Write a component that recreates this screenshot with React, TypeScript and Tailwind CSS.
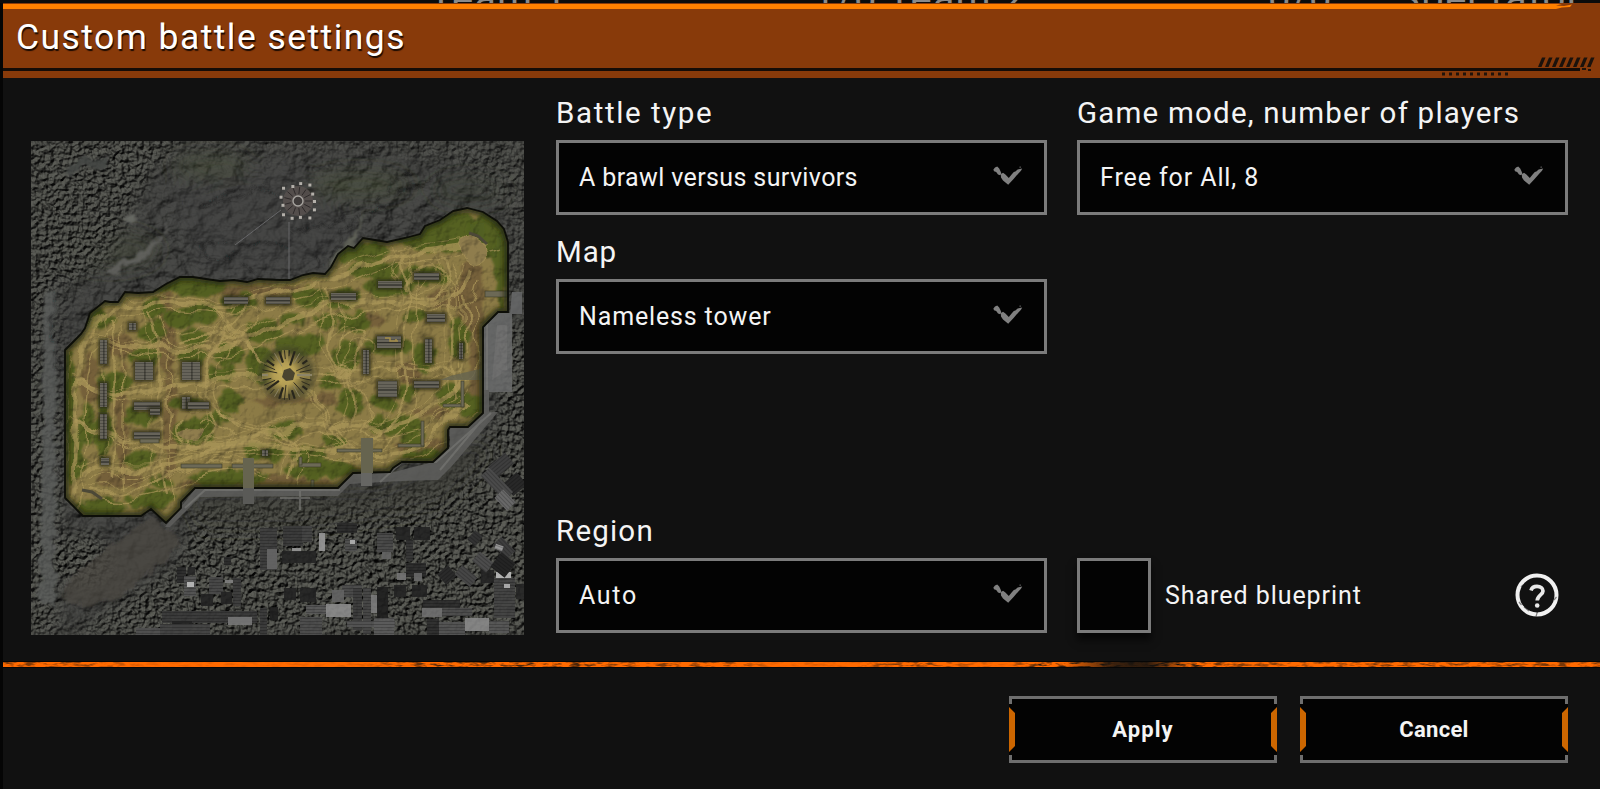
import React from "react";

const AREA =
  "65,350 75,340 81,334 85,328 90,313 105,301 110,302 118,302 125,292 138,293 153,292 166,284 180,277 193,277 206,279 220,281 234,280 247,282 258,279 280,280 290,280 303,275 313,273 325,274 331,267 338,254 348,246 354,248 363,238 375,240 387,242 405,238 420,234 425,226 440,220 453,211 467,208 483,212 497,221 504,229 508,242 508,312 498,312 483,327 483,413 468,427 450,427 448,430 448,448 433,462 402,462 393,468 390,472 353,473 338,488 195,488 181,502 181,508 166,523 151,509 141,516 83,516 65,498";

// cx, cy, rx, ry
const grass: number[][] = [
  [190, 286, 36, 8], [98, 320, 13, 7], [155, 308, 11, 8], [153, 331, 11, 9], [183, 318, 17, 8], [204, 314, 12, 8],
  [193, 338, 14, 6], [237, 303, 18, 7], [228, 355, 13, 9], [144, 356, 14, 6], [191, 356, 13, 6], [264, 332, 16, 9],
  [222, 374, 12, 6], [69, 400, 4, 45], [262, 366, 14, 15], [440, 232, 44, 20], [490, 232, 18, 24], [360, 252, 26, 8],
  [390, 287, 22, 7], [373, 271, 24, 7], [426, 275, 22, 8], [310, 298, 14, 7], [345, 297, 18, 7], [345, 322, 7, 8],
  [324, 322, 9, 7], [360, 323, 7, 10], [293, 320, 11, 5], [347, 355, 14, 13], [300, 345, 24, 8], [390, 347, 22, 7],
  [415, 317, 8, 5], [459, 340, 7, 20], [501, 270, 5, 38], [230, 401, 12, 9], [193, 431, 19, 12], [140, 459, 14, 7],
  [214, 418, 12, 4], [257, 452, 13, 7], [74, 455, 8, 30], [100, 508, 26, 7], [150, 500, 22, 6], [162, 482, 10, 5],
  [121, 381, 9, 8], [350, 402, 11, 12], [285, 430, 15, 7], [310, 454, 15, 8], [395, 425, 25, 8], [412, 438, 10, 6],
  [335, 441, 10, 6], [272, 453, 8, 8], [382, 404, 12, 6], [450, 396, 12, 9], [472, 405, 9, 10], [424, 358, 9, 12],
  [140, 418, 14, 6], [104, 436, 7, 22], [88, 425, 5, 20], [105, 396, 6, 18], [187, 404, 17, 4], [320, 470, 36, 6],
  [230, 478, 38, 6], [425, 455, 20, 5], [330, 383, 9, 7], [406, 392, 9, 5],
];

const brown: number[][] = [
  [166, 330, 8, 40], [170, 420, 7, 60], [122, 420, 6, 60], [118, 480, 24, 7], [260, 485, 80, 8], [430, 448, 40, 8],
  [470, 300, 14, 40], [478, 370, 9, 44], [250, 290, 60, 5], [120, 345, 14, 12], [90, 380, 8, 26], [370, 320, 16, 6],
  [430, 412, 18, 5], [340, 470, 30, 6], [445, 300, 18, 7], [320, 400, 14, 5], [280, 400, 30, 4], [408, 372, 12, 12],
];

const roads = [
  "M70 500 C78 420 70 360 95 320 C120 300 180 300 210 305 S330 280 380 262 S470 250 490 240",
  "M90 340 C140 350 220 355 245 340 S330 300 400 300 S460 310 470 270",
  "M80 380 C110 400 140 395 170 385 S240 380 262 376",
  "M85 470 C130 460 160 475 190 460 S240 440 330 450 S420 450 470 400",
  "M75 420 C120 450 160 445 210 445 S300 415 340 425 S440 420 460 380",
  "M210 305 C230 330 245 345 262 360 M300 385 C330 410 330 430 350 455",
  "M250 300 C240 330 210 340 205 370 S215 420 260 430 S300 440 290 480",
  "M310 375 C350 370 400 365 440 372 S470 350 465 300",
  "M400 250 C420 300 400 320 405 370 S390 420 370 440",
  "M330 290 C340 320 320 340 335 360 S370 390 350 430",
  "M110 320 C120 370 110 430 115 480 M150 310 C170 350 150 420 165 495",
  "M440 255 C460 290 445 340 455 400 M90 490 C130 500 160 480 190 470 S240 460 260 470",
  "M180 340 C200 330 230 330 250 350 M180 420 C170 440 190 450 210 440 S220 410 190 415",
  "M405 290 C412 262 440 262 446 280 S430 300 410 292 M340 340 C355 325 370 330 362 350 S350 380 338 372",
];

const houses: number[][] = [
  [224, 297, 24, 7], [266, 297, 24, 7], [129, 323, 7, 7], [100, 340, 7, 24], [135, 362, 18, 18], [182, 362, 18, 18],
  [100, 383, 7, 24], [331, 293, 25, 7], [378, 281, 24, 7], [414, 273, 25, 7], [427, 314, 18, 8], [377, 336, 24, 12],
  [363, 350, 6, 24], [425, 339, 7, 24], [459, 343, 4, 16], [378, 381, 19, 16], [414, 381, 25, 7], [100, 414, 7, 25],
  [134, 402, 26, 8], [150, 409, 10, 6], [182, 397, 8, 12], [188, 402, 21, 7], [134, 432, 26, 7], [101, 458, 8, 7],
  [262, 450, 6, 6],
];

const walls: number[][] = [
  [181, 464, 41, 4], [232, 464, 41, 4], [337, 449, 45, 3], [398, 444, 26, 3], [421, 421, 3, 25], [299, 463, 22, 4],
  [299, 457, 3, 8], [443, 404, 21, 3], [461, 381, 3, 26], [485, 291, 24, 6], [311, 480, 3, 14], [140, 439, 19, 4],
];

// x, y, w, h, grey level
const city: number[][] = [
  [260, 528, 17, 42, 62], [267, 549, 10, 20, 102], [177, 567, 9, 16, 43], [188, 567, 7, 8, 38], [184, 576, 12, 20, 84],
  [187, 582, 7, 5, 190], [162, 611, 95, 12, 58], [172, 621, 20, 8, 34], [228, 617, 24, 8, 120], [209, 577, 14, 17, 72],
  [201, 594, 12, 12, 34], [221, 592, 11, 12, 34], [233, 578, 8, 28, 60], [225, 580, 8, 3, 130], [136, 628, 24, 7, 80],
  [160, 624, 50, 11, 68], [260, 608, 7, 27, 58], [224, 557, 7, 8, 44], [283, 526, 20, 20, 58], [302, 526, 10, 16, 68],
  [319, 533, 6, 18, 152], [292, 548, 9, 4, 150], [282, 551, 34, 12, 36], [337, 523, 20, 10, 42], [345, 539, 12, 12, 80],
  [350, 540, 5, 4, 180], [377, 533, 16, 19, 74], [382, 552, 9, 7, 100], [396, 527, 14, 13, 34], [414, 527, 16, 13, 34],
  [406, 540, 7, 21, 52], [406, 563, 20, 14, 42], [397, 573, 9, 7, 116], [414, 573, 8, 8, 104], [394, 585, 12, 12, 34],
  [412, 585, 15, 12, 34], [342, 585, 20, 12, 76], [284, 588, 12, 12, 34], [300, 588, 16, 14, 34], [306, 605, 20, 9, 90],
  [326, 604, 25, 13, 140], [353, 588, 9, 42, 60], [363, 588, 8, 46, 70], [377, 587, 11, 31, 30], [371, 595, 6, 18, 124],
  [300, 617, 22, 18, 78], [347, 621, 48, 6, 84], [374, 618, 20, 17, 92], [423, 600, 37, 8, 46], [422, 608, 20, 9, 112],
  [442, 608, 30, 8, 78], [427, 619, 12, 16, 46], [439, 622, 26, 13, 84], [465, 618, 24, 13, 136], [489, 621, 20, 12, 88],
  [496, 572, 15, 6, 188], [494, 578, 21, 40, 68], [504, 584, 6, 4, 180], [516, 584, 8, 15, 38], [270, 607, 8, 13, 30],
  [332, 590, 12, 12, 100], [481, 570, 13, 13, 34],
];

// x, y, w, h, angle, grey level
const turned: number[][] = [
  [490, 458, 22, 14, -40, 62], [506, 476, 18, 16, -40, 40], [480, 478, 34, 12, 46, 74], [496, 494, 18, 12, 46, 104],
  [474, 556, 18, 12, 40, 76], [494, 542, 20, 12, 46, 62], [494, 556, 18, 18, 38, 36], [440, 568, 14, 14, -40, 42],
  [456, 570, 20, 12, 40, 70], [495, 545, 8, 5, 20, 150], [470, 532, 10, 12, 40, 50],
];

const rays = Array.from({ length: 30 }, (_, i) => (i * 12 * Math.PI) / 180);
const posts = Array.from({ length: 13 }, (_, i) => (i * 27.7 * Math.PI) / 180);

const MapPreview: React.FC = () => (
  <svg className="block h-[494px] w-[493px]" viewBox="31 141 493 494">
    <defs>
      <clipPath id="frame">
        <rect x="31" y="141" width="493" height="494" />
      </clipPath>
      <clipPath id="area">
        <polygon points={AREA} />
      </clipPath>
      <filter id="rock" x="0" y="0" width="1" height="1" colorInterpolationFilters="sRGB">
        <feTurbulence type="fractalNoise" baseFrequency="0.05 0.06" numOctaves={5} seed={8} />
        <feDiffuseLighting surfaceScale={6} diffuseConstant={0.46} lightingColor="#9fa09b">
          <feDistantLight azimuth={225} elevation={62} />
        </feDiffuseLighting>
      </filter>
      <filter id="trees" x="0" y="0" width="1" height="1" colorInterpolationFilters="sRGB">
        <feTurbulence type="fractalNoise" baseFrequency="0.21" numOctaves={4} seed={21} />
        <feDiffuseLighting surfaceScale={4.6} diffuseConstant={0.62} lightingColor="#9c9e93">
          <feDistantLight azimuth={235} elevation={50} />
        </feDiffuseLighting>
      </filter>
      <filter id="ground" x="0" y="0" width="1" height="1" colorInterpolationFilters="sRGB">
        <feTurbulence type="fractalNoise" baseFrequency="0.07" numOctaves={4} seed={4} />
        <feDiffuseLighting surfaceScale={2} diffuseConstant={1.12} lightingColor="#ffffff">
          <feDistantLight azimuth={225} elevation={62} />
        </feDiffuseLighting>
      </filter>
      <filter id="rough" x="-10%" y="-10%" width="120%" height="120%">
        <feTurbulence type="fractalNoise" baseFrequency="0.07" numOctaves={4} seed={3} result="n" />
        <feDisplacementMap in="SourceGraphic" in2="n" scale={15} xChannelSelector="R" yChannelSelector="G" />
        <feGaussianBlur stdDeviation={0.9} />
      </filter>
      <filter id="trail" x="-10%" y="-10%" width="120%" height="120%">
        <feTurbulence type="fractalNoise" baseFrequency="0.035" numOctaves={2} seed={9} result="n" />
        <feDisplacementMap in="SourceGraphic" in2="n" scale={20} xChannelSelector="R" yChannelSelector="G" />
        <feGaussianBlur stdDeviation={0.7} />
      </filter>
      <filter id="soft">
        <feGaussianBlur stdDeviation={9} />
      </filter>
      <filter id="soft2">
        <feGaussianBlur stdDeviation={2.5} />
      </filter>
      <filter id="shade" x="-50%" y="-50%" width="200%" height="200%">
        <feGaussianBlur stdDeviation={1.4} />
      </filter>
      <mask id="forest">
        <g fill="#fff" filter="url(#soft)">
          <path d="M20 130H200L150 175L110 260L70 290L60 640H20Z" fillOpacity={0.85} />
          <path d="M170 130H540V300H500L505 215L470 170L380 150H200Z" fillOpacity={0.55} />
          <path d="M60 640L180 560L190 500L340 500L450 480L495 420V320H540V640Z" fillOpacity={0.9} />
          <circle cx="85" cy="560" r="28" />
        </g>
      </mask>
      <radialGradient id="core">
        <stop offset="0" stopColor="#d2bb62" />
        <stop offset="0.5" stopColor="#b39d52" />
        <stop offset="1" stopColor="#a08c4c" stopOpacity={0} />
      </radialGradient>
      <pattern id="roof" width="3" height="3" patternUnits="userSpaceOnUse">
        <path d="M0 0.5H3" stroke="#000" strokeOpacity={0.2} />
      </pattern>
    </defs>
    <g clipPath="url(#frame)">
      <rect x="31" y="141" width="493" height="494" filter="url(#rock)" />
      <g filter="url(#soft)">
        <path d="M170 190L290 165L360 230L310 270L200 270Z" fill="#414143" fillOpacity={0.45} />
        <ellipse cx="210" cy="165" rx="40" ry="12" fill="#4b5238" fillOpacity={0.4} />
        <ellipse cx="360" cy="185" rx="50" ry="14" fill="#4b5238" fillOpacity={0.4} />
        <ellipse cx="110" cy="250" rx="50" ry="20" fill="#3d4536" fillOpacity={0.45} />
        <ellipse cx="470" cy="190" rx="40" ry="16" fill="#3d4536" fillOpacity={0.35} />
      </g>
      <rect x="31" y="141" width="493" height="494" filter="url(#trees)" mask="url(#forest)" />
      <g filter="url(#soft)" fillOpacity={0.4}>
        <path d="M180 490H380L470 440L500 450L440 510L300 530H200Z" fill="#363732" />
        <ellipse cx="60" cy="340" rx="20" ry="60" fill="#363938" />
      </g>
      <g filter="url(#rough)">
        <path d="M45 290L56 290L55 605L40 605Z" fill="#5a5c5a" fillOpacity={0.8} />
        <path d="M150 515L62 585L70 605L120 600L180 545Z" fill="#4a4641" fillOpacity={0.75} />
        <path d="M170 212L162 235L130 260L100 274L120 275L145 258L165 236Z" fill="#656561" fillOpacity={0.85} />
        <path d="M372 212L350 238L325 272L334 272L352 245Z" fill="#64665c" fillOpacity={0.85} />
        <path d="M62 170L85 155L105 160L100 170L80 168L65 180Z" fill="#434543" fillOpacity={0.9} />
        <path d="M120 222L135 212L138 220L128 224Z" fill="#666762" />
      </g>
      <g fill="none" stroke="#1d1e1e" strokeWidth={1.1} strokeOpacity={0.9} filter="url(#rough)">
        <path d="M200 210L260 190L285 200M205 240L250 248L262 240L285 250M198 240L205 262L240 255" />
        <path d="M330 270L345 225L372 210L395 180L410 175M395 195L420 185L440 170M290 230L330 225L345 215" />
        <path d="M53 290L55 365L66 368M240 260L260 280M300 240L320 262M200 205L235 190L270 185" />
        <path d="M400 190l14 -4M380 205l10 3M205 242l12 4" strokeWidth={3} />
      </g>
      <path d="M289 222V290M281 210L235 245" stroke="#77777a" strokeOpacity={0.7} fill="none" />
      <circle cx="298" cy="201" r="15" fill="#57504e" fillOpacity={0.9} />
      {posts.map((a, i) => (
        <g key={i}>
          <path
            d={`M${298 + 7 * Math.cos(a)} ${201 + 7 * Math.sin(a)}L${298 + 14 * Math.cos(a)} ${201 + 14 * Math.sin(a)}`}
            stroke="#2e2a2a"
          />
          <rect
            x={297 + (16 + (i % 3) * 2) * Math.cos(a)}
            y={200 + (16 + (i % 3) * 2) * Math.sin(a)}
            width="3"
            height="3"
            fill="#b4b0aa"
          />
        </g>
      ))}
      <circle cx="298" cy="201" r="5" fill="#3f3b3a" stroke="#a8a5a0" strokeWidth="1.4" />

      {/* concrete border along the right and bottom edge */}
      <g opacity={0.85}>
        <path d="M498 313L512 313V392H484V327Z" fill="#6b6c6c" />
        <path d="M512 292H522V314H510Z" fill="#68696a" />
        <path d="M484 390H489V412H498L452 466L438 480L400 481L350 484L338 496L200 497L170 527H165L196 488H338L353 473H390L433 462L450 447V427H468L484 413Z" fill="#5f5f5d" />
        <path
          d="M487 318V390M491 413L436 462H402L380 482M482 420L440 470M340 490H205L185 508M300 488V510M280 498H310"
          stroke="#858582"
          strokeOpacity={0.6}
          strokeWidth="2"
          fill="none"
        />
        <path d="M497 325L507 325V370L492 380Z" fill="#7b7c7c" fillOpacity={0.6} />
      </g>

      {city.map(([x, y, w, h, g], i) => (
        <g key={i}>
          <rect x={x} y={y} width={w} height={h} fill={`rgb(${g},${g},${g})`} fillOpacity={0.9} />
          {g < 100 && g > 40 && <rect x={x} y={y} width={w} height={h} fill="url(#roof)" />}
        </g>
      ))}
      {turned.map(([x, y, w, h, r, g], i) => (
        <g key={i} transform={`rotate(${r} ${x + w / 2} ${y + h / 2})`}>
          <rect x={x} y={y} width={w} height={h} fill={`rgb(${g},${g},${g})`} />
          <rect x={x} y={y} width={w} height={h} fill="url(#roof)" />
        </g>
      ))}

      <g clipPath="url(#area)">
        <polygon points={AREA} fill="#8c7b46" />
        <g filter="url(#rough)">
          {brown.map(([cx, cy, rx, ry], i) => (
            <ellipse key={i} cx={cx} cy={cy} rx={rx} ry={ry} fill="#6c5634" fillOpacity={0.75} />
          ))}
        </g>
        <g filter="url(#rough)">
          {grass.map(([cx, cy, rx, ry], i) => (
            <ellipse key={i} cx={cx} cy={cy} rx={rx + 2} ry={ry + 2} fill="#505f1f" fillOpacity={0.92} />
          ))}
        </g>
        <g filter="url(#trail)" fill="none" stroke="#ab975a">
          {roads.map((d, i) => (
            <path key={i} d={d} strokeWidth={i < 5 ? 5 : 2.5} strokeOpacity={0.75} />
          ))}
          {roads.map((d, i) => (
            <path key={i} d={d} strokeWidth={1.3} strokeOpacity={0.75} transform="translate(10 8)" />
          ))}
          {roads.map((d, i) => (
            <path key={i} d={d} strokeWidth={1.1} strokeOpacity={0.6} transform="translate(-9 -6)" />
          ))}
          <ellipse cx="475" cy="250" rx="13" ry="15" fill="#8f7d4d" strokeOpacity={0.6} />
          <ellipse cx="192" cy="433" rx="13" ry="5" fill="#8f7d4d" stroke="none" />
        </g>
        <g style={{ mixBlendMode: "multiply" }}>
          <rect x="31" y="141" width="493" height="494" filter="url(#ground)" />
        </g>
        <circle cx="287" cy="374" r="28" fill="#3f4024" fillOpacity={0.6} filter="url(#soft2)" />
        <circle cx="285" cy="374" r="22" fill="url(#core)" />
        <path d="M262 376H310M285 350V398" stroke="#b39d55" strokeWidth="6" strokeOpacity={0.5} />
        {rays.map((a, i) => (
          <path
            key={i}
            d={`M${287 + (10 + (i % 4) * 3) * Math.cos(a)} ${375 + (10 + (i % 4) * 3) * Math.sin(a)}L${287 + 25 * Math.cos(a)} ${375 + 25 * Math.sin(a)}`}
            stroke={i % 5 === 0 ? "#8c8468" : "#28261c"}
            strokeWidth={i % 3 === 0 ? 2.2 : 0.9}
          />
        ))}
        <path d="M284 370l6-2 5 5-2 7-7 1-4-4z" fill="#4a442f" />
        {houses.map(([x, y, w, h], i) => (
          <g key={i}>
            <rect x={x - 2} y={y - 2} width={w + 4} height={h + 4} fill="#1f210d" fillOpacity={0.75} filter="url(#shade)" />
            <rect x={x} y={y} width={w} height={h} fill="#67645a" />
            <path
              d={w > h ? `M${x} ${y + h * 0.55}H${x + w}` : `M${x + w * 0.55} ${y}V${y + h}`}
              stroke="#3c3b35"
              strokeWidth={1.3}
            />
            <rect x={x} y={y} width={w} height={h} fill="url(#roof)" />
          </g>
        ))}
        {walls.map(([x, y, w, h], i) => (
          <rect key={i} x={x} y={y} width={w} height={h} fill="#6c6956" stroke="#3b3924" strokeWidth={0.6} />
        ))}
        <path d="M385 338h5v3h6v-2M394 341h4" stroke="#a48d4a" strokeWidth="1.5" fill="none" />
        <path d="M450 376L484 368V380H440Z" fill="#65644f" fillOpacity={0.8} />
        <path d="M82 490L92 492L102 499M469 233L478 236L487 244" stroke="#4c4837" strokeWidth="3" fill="none" />
        <polygon points={AREA} fill="none" stroke="#22280a" strokeOpacity={0.8} strokeWidth={9} filter="url(#soft2)" />
      </g>
      <polygon points={AREA} fill="none" stroke="#0d0e08" strokeWidth={1.8} />
      <rect x="243" y="458" width="11" height="30" fill="#66644f" />
      <rect x="243" y="488" width="11" height="16" fill="#5a5a57" />
      <rect x="361" y="438" width="12" height="35" fill="#66644f" />
      <rect x="361" y="473" width="11" height="13" fill="#666663" />
    </g>
  </svg>
);

const Chevron: React.FC = () => (
  <svg className="h-5 w-[30px]" viewBox="0 0 30 20">
    <g fill="#808080">
      <path d="M0.4 3.6L2 1.4L4.2 0.6L6.2 2.6L7.4 5L8.4 7.6L7.2 9.2L5 8.4L3.2 6L1 5.2Z" />
      <path d="M7.8 8.2L10 6.8L12.4 8.4L15.8 12L18.6 8.6L20.8 6L22.4 5.6L24.6 3.4L29.2 2.6L28 4.8L25.4 7.4L20.8 12.8L15.2 18.8L10 14.4L8 11.4Z" />
      <circle cx="27.2" cy="1.2" r="0.9" fillOpacity={0.5} />
    </g>
  </svg>
);

interface FieldProps {
  label: string;
  value: string;
  labelClass: string;
  valueClass: string;
}

const SelectField: React.FC<FieldProps> = ({ label, value, labelClass, valueClass }) => (
  <div className="w-[491px]">
    <div className={`h-[43px] text-[29.5px] leading-[33px] whitespace-nowrap ${labelClass}`}>{label}</div>
    <div className="flex h-[75px] items-center justify-between border-[3px] border-[#7b7b7b] bg-[#030303] pr-[21px] pl-5">
      <span className={`text-[25px] leading-none whitespace-nowrap ${valueClass}`}>{value}</span>
      <div className="pb-1">
        <Chevron />
      </div>
    </div>
  </div>
);

const ActionButton: React.FC<{ label: string; labelClass: string }> = ({ label, labelClass }) => (
  <button className="relative flex h-[67px] w-[268px] items-center justify-center bg-[#030303] pt-px">
    <svg className="absolute inset-0 h-[67px] w-[268px]" viewBox="0 0 268 67">
      <path d="M1.5 8V1.5H266.5V8M1.5 59V65.5H266.5V59" fill="none" stroke="#6e6e6e" strokeWidth="3" />
      <path d="M0 11L6 17V50L0 56ZM268 11L262 17V50L268 56Z" fill="#cc6600" />
    </svg>
    <span className={`relative text-[22px] leading-none font-bold ${labelClass}`}>{label}</span>
  </button>
);

const Divider: React.FC = () => (
  <svg className="block h-2 w-[1597px]" viewBox="0 0 1597 8">
    <defs>
      <filter id="scratch" x="0" y="0" width="1" height="1" colorInterpolationFilters="sRGB">
        <feTurbulence type="fractalNoise" baseFrequency="0.09 0.35" numOctaves={3} seed={12} />
        <feColorMatrix values="0 0 0 0 0.12  0 0 0 0 0.08  0 0 0 0 0.04  3.4 0 0 0 -1.5" />
        <feComposite in2="SourceGraphic" operator="in" />
      </filter>
      <linearGradient id="worn">
        <stop offset="0" stopOpacity={0.6} />
        <stop offset="0.05" stopOpacity={0.5} />
        <stop offset="0.09" stopOpacity={0.1} />
        <stop offset="0.22" stopOpacity={0.1} />
        <stop offset="0.27" stopOpacity={0.8} />
        <stop offset="0.36" stopOpacity={0.8} />
        <stop offset="0.39" stopOpacity={0.5} />
        <stop offset="0.45" stopOpacity={0.6} />
        <stop offset="0.48" stopOpacity={0.15} />
        <stop offset="0.53" stopOpacity={0.15} />
        <stop offset="0.57" stopOpacity={0.75} />
        <stop offset="0.6" stopOpacity={0.3} />
        <stop offset="0.63" stopOpacity={0.1} />
        <stop offset="0.65" stopOpacity={1} />
        <stop offset="0.74" stopOpacity={1} />
        <stop offset="0.78" stopOpacity={0.5} />
        <stop offset="0.85" stopOpacity={0.6} />
        <stop offset="1" stopOpacity={0.6} />
      </linearGradient>
      <linearGradient id="gap">
        <stop offset="0" stopColor="#17130f" stopOpacity={0} />
        <stop offset="0.4" stopColor="#17130f" stopOpacity={0.85} />
        <stop offset="0.65" stopColor="#17130f" stopOpacity={0.9} />
        <stop offset="1" stopColor="#17130f" stopOpacity={0} />
      </linearGradient>
    </defs>
    <rect width="1597" height="8" fill="#060606" />
    <rect y="1" width="1597" height="5" fill="#ff6a00" />
    <rect y="1" width="1597" height="5" fill="url(#worn)" filter="url(#scratch)" />
    <rect x="1060" y="1" width="130" height="5" fill="url(#gap)" />
    <rect y="7" width="1597" height="1" fill="#111111" />
  </svg>
);

const slashes = Array.from({ length: 8 }, (_, i) => 9 + i * 7);
const dots = Array.from({ length: 10 }, (_, i) => i);

const App: React.FC = () => (
  <div className="flex h-[789px] w-[1600px] flex-col overflow-hidden bg-[#050505] font-[Roboto,sans-serif] text-[#f4f4f4]">
    <div className="relative h-[3px] overflow-hidden bg-[#0b0b0b] text-[40px] leading-[40px] whitespace-nowrap text-[#8a8a8a]">
      <span className="absolute -top-[21px] left-[429px] tracking-[1px]">Team 1</span>
      <span className="absolute -top-[21px] left-[813px] tracking-[1px]">1/0 Team 2</span>
      <span className="absolute -top-[21px] left-[1268px] tracking-[1px]">0/0</span>
      <span className="absolute -top-[21px] left-[1396px] tracking-[1.5px]">Spectator</span>
    </div>

    <div className="ml-[3px] flex grow flex-col bg-[#111111]">
      <header className="relative flex h-[75px] flex-col bg-[#883a0a]">
        <div className="mt-px h-[5px] w-[1540px] bg-[#ff8000]" />
        <div className="flex h-[59px] items-center pb-px pl-[13px]">
          <h1 className="text-[35.5px] leading-none tracking-[1.45px] text-white [text-shadow:1px_2px_1px_#1a0a02]">
            Custom battle settings
          </h1>
        </div>
        <div className="h-[3px] w-[1577px] bg-[#150c07]" />
        <svg className="absolute right-0 bottom-0 h-[75px] w-40" viewBox="0 0 160 75">
          <path d="M100 1L122 1L116 2.5L124 3L132 1.5L130 4L122 4.5L116 6L100 6Z" fill="#ff8000" />
          {slashes.map((x) => (
            <path key={x} d={`M${x + 89} 64L${x + 93} 54.5H${x + 96.5}L${x + 92.5} 64Z`} fill="#1b120c" />
          ))}
          {dots.map((i) => (
            <rect key={i} x={2 + i * 7} y="69.5" width="3" height="3" fill="#20130b" />
          ))}
          <path d="M142 65h4v2h-4zM148 66h3v2h-3z" fill="#20130b" />
        </svg>
      </header>

      <main className="flex h-[583px] pl-7">
        <div className="pt-[63px]">
          <MapPreview />
        </div>
        <div className="ml-8 grid grid-cols-[521px_491px] grid-rows-[139px_279px_118px] pt-[19px]">
          <SelectField
            label="Battle type"
            value="A brawl versus survivors"
            labelClass="tracking-[1.6px]"
            valueClass="tracking-[0.38px]"
          />
          <SelectField
            label="Game mode, number of players"
            value="Free for All, 8"
            labelClass="tracking-[1.2px]"
            valueClass="tracking-[0.9px]"
          />
          <SelectField
            label="Map"
            value="Nameless tower"
            labelClass="tracking-[0.9px]"
            valueClass="tracking-[0.85px]"
          />
          <div />
          <SelectField label="Region" value="Auto" labelClass="tracking-[1.2px]" valueClass="tracking-[1.7px]" />
          <div className="flex items-center self-end">
            <div className="h-[75px] w-[74px] border-[3px] border-[#7b7b7b] bg-[#030303] shadow-[0_7px_8px_#000000a0]" />
            <span className="ml-[14px] text-[25px] leading-none tracking-[0.95px]">Shared blueprint</span>
            <svg className="mr-[9px] mb-px ml-auto h-11 w-11" viewBox="0 0 44 44">
              <circle cx="22" cy="22" r="19.5" fill="none" stroke="#f0f0f0" strokeWidth="4" />
              <path
                d="M21 43.5L22.5 38.5M4 29L6.5 32M41.5 24L39 27M9 34L14 38M6 14L8 12"
                stroke="#111"
                strokeOpacity={0.5}
                strokeWidth="1.2"
                fill="none"
              />
              <path
                d="M16 17.5C16.8 14.6 19 13.4 22 13.4C25.6 13.4 28 15.2 28 18C28 21.8 22.4 22 22.2 27.5"
                fill="none"
                stroke="#e8e8e8"
                strokeWidth="3.7"
              />
              <circle cx="22.2" cy="32.5" r="2.3" fill="#e8e8e8" />
            </svg>
          </div>
        </div>
      </main>

      <Divider />

      <footer className="flex justify-end gap-[23px] pt-[27px] pr-8">
        <ActionButton label="Apply" labelClass="tracking-[1.1px]" />
        <ActionButton label="Cancel" labelClass="tracking-[0.3px]" />
      </footer>
    </div>
  </div>
);

export default App;
